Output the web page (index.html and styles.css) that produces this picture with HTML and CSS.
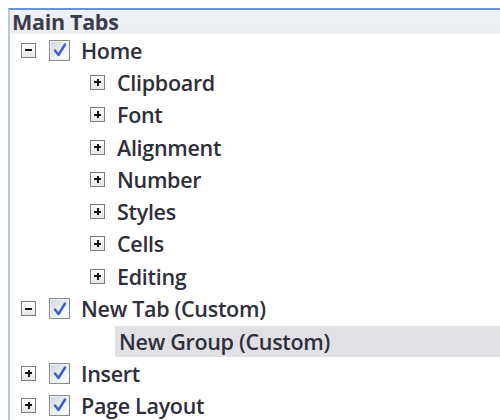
FILE: index.html
```html
<!DOCTYPE html>
<html>
<head>
<meta charset="utf-8">
<link rel="stylesheet" href="styles.css">
</head>
<body>
<div class="panel">
  <div class="header">Main Tabs</div>
  <ul class="tree">
    <li class="row root">
      <span class="toggle minus"></span>
      <span class="check"><svg viewBox="0 0 18 18"><path d="M4 9.5 L7.5 14 L14 3.5" /></svg></span>
      <span class="label">Home</span>
    </li>
    <li class="row child"><span class="toggle plus"></span><span class="label">Clipboard</span></li>
    <li class="row child"><span class="toggle plus"></span><span class="label">Font</span></li>
    <li class="row child"><span class="toggle plus"></span><span class="label">Alignment</span></li>
    <li class="row child"><span class="toggle plus"></span><span class="label">Number</span></li>
    <li class="row child"><span class="toggle plus"></span><span class="label">Styles</span></li>
    <li class="row child"><span class="toggle plus"></span><span class="label">Cells</span></li>
    <li class="row child"><span class="toggle plus"></span><span class="label">Editing</span></li>
    <li class="row root">
      <span class="toggle minus"></span>
      <span class="check"><svg viewBox="0 0 18 18"><path d="M4 9.5 L7.5 14 L14 3.5" /></svg></span>
      <span class="label">New Tab (Custom)</span>
    </li>
    <li class="row group"><span class="label selected">New Group (Custom)</span></li>
    <li class="row root">
      <span class="toggle plus"></span>
      <span class="check"><svg viewBox="0 0 18 18"><path d="M4 9.5 L7.5 14 L14 3.5" /></svg></span>
      <span class="label">Insert</span>
    </li>
    <li class="row root">
      <span class="toggle plus"></span>
      <span class="check"><svg viewBox="0 0 18 18"><path d="M4 9.5 L7.5 14 L14 3.5" /></svg></span>
      <span class="label">Page Layout</span>
    </li>
  </ul>
</div>
</body>
</html>
```
FILE: styles.css
```css
html, body {
  margin: 0;
  padding: 0;
  background: #ffffff;
}

body {
  font-family: "Open Sans", "Noto Sans", sans-serif;
  color: #2f2f3a;
}

.panel {
  margin: 8px 0 0 8px;
  border-top: 2px solid #6b93cf;
  border-left: 2px solid #b7c6dc;
  height: 410px;
  overflow: hidden;
}

.header {
  height: 24px;
  line-height: 24px;
  padding-left: 2px;
  font-size: 21.5px;
  font-weight: 700;
  color: #3c3c4c;
  letter-spacing: -0.3px;
  background: linear-gradient(#eef1f5, #ebeef1 85%, #f4f4f4);
}

.tree {
  list-style: none;
  margin: 0;
  padding: 0;
}

.row {
  display: flex;
  align-items: center;
  height: 32.3px;
  font-size: 21.5px;
  font-weight: 600;
  letter-spacing: -0.3px;
}

.root {
  padding-left: 11px;
}

.child {
  padding-left: 80px;
}

.group {
  padding-left: 105px;
}

/* expand / collapse box */
.toggle {
  position: relative;
  box-sizing: border-box;
  width: 15px;
  height: 15px;
  border: 1px solid #7e7e7e;
  background: linear-gradient(#ffffff, #e6e6e6);
  flex: none;
}

.toggle::before,
.toggle.plus::after {
  content: "";
  position: absolute;
  background: #151515;
}

.toggle::before {
  left: 3px;
  right: 3px;
  top: 5.5px;
  height: 2px;
}

.toggle.plus::after {
  top: 3px;
  bottom: 3px;
  left: 5.5px;
  width: 2px;
}

.root .toggle {
  margin-right: 13px;
}

.child .toggle {
  margin-right: 12px;
}

/* tick box */
.check {
  box-sizing: border-box;
  width: 21px;
  height: 21px;
  border: 1px solid #8a8b8c;
  background: linear-gradient(135deg, #cfd6df, #f4f6f8 70%, #ffffff);
  box-shadow: inset 0 0 0 1px #eef0f2;
  margin-right: 11px;
  flex: none;
  display: flex;
  align-items: center;
  justify-content: center;
}

.check svg {
  width: 18px;
  height: 18px;
}

.check path {
  fill: none;
  stroke: #3b5fd0;
  stroke-width: 2.4;
  stroke-linecap: round;
  stroke-linejoin: round;
}

.label {
  white-space: nowrap;
}

.selected {
  flex: 1;
  align-self: stretch;
  display: flex;
  align-items: center;
  padding-left: 4px;
  margin-top: 1px;
  background: #e1e1e5;
}
```
